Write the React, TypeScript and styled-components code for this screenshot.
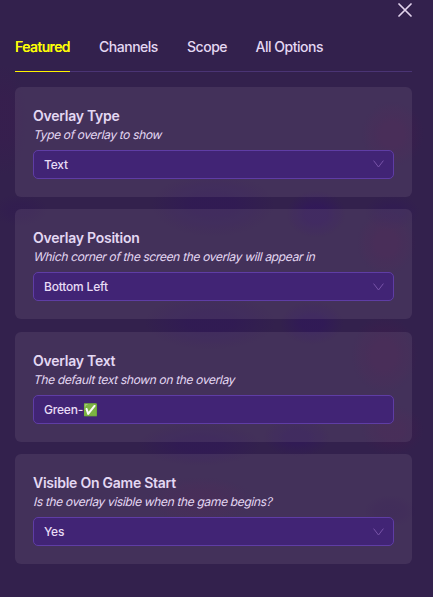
import React from 'react';
import styled, { createGlobalStyle } from 'styled-components';

const GlobalStyle = createGlobalStyle`
  *, *::before, *::after { box-sizing: border-box; }
  body { margin: 0; background: #33214d; }
`;

const glow = (x: number, y: number, w: number, h: number, color: string) =>
  `radial-gradient(ellipse ${w}px ${h}px at ${x}px ${y}px, ${color} 0%, ${color} 35%, transparent 100%)`;

const backdrop = [
  glow(213, 205, 62, 32, 'rgba(46,20,90,.45)'),
  glow(316, 214, 30, 24, 'rgba(48,18,98,.5)'),
  glow(392, 212, 28, 18, 'rgba(46,20,90,.3)'),
  glow(210, 322, 66, 28, 'rgba(46,20,90,.45)'),
  glow(312, 323, 32, 22, 'rgba(46,18,96,.45)'),
  glow(200, 444, 62, 22, 'rgba(46,20,90,.45)'),
  glow(297, 437, 34, 20, 'rgba(46,18,96,.4)'),
  glow(392, 134, 32, 34, 'rgba(74,24,74,.35)'),
  glow(386, 243, 30, 34, 'rgba(74,24,74,.35)'),
  glow(384, 355, 34, 40, 'rgba(74,24,74,.35)'),
  glow(392, 430, 32, 26, 'rgba(74,24,74,.3)'),
  glow(200, 500, 56, 24, 'rgba(74,24,74,.3)'),
  glow(390, 511, 26, 16, 'rgba(46,20,80,.35)'),
  glow(4, 120, 24, 56, 'rgba(64,24,80,.25)'),
  glow(20, 210, 28, 16, 'rgba(46,20,84,.25)'),
].join(',');

const Panel = styled.main`
  width: 433px;
  height: 597px;
  overflow: hidden;
  display: flex;
  flex-direction: column;
  padding: 0 21px 0 15px;
  background: ${backdrop}, #33214d;
  color: #e4d8f3;
  font-family: Inter, 'Noto Color Emoji', sans-serif;
`;

const Header = styled.header`
  display: flex;
  justify-content: flex-end;
  height: 22px;
  padding-top: 3px;
`;

const CloseButton = styled.button`
  width: 14px;
  height: 14px;
  padding: 0;
  border: 0;
  background: none;
  color: #e2d3ed;
  svg { display: block; }
`;

const TabBar = styled.nav`
  display: flex;
  gap: 29px;
  height: 50px;
  flex: none;
  background: linear-gradient(#4a3474, #4a3474) bottom / 100% 1px no-repeat;
`;

const Tab = styled.button<{ $active?: boolean; $width: number }>`
  width: ${p => p.$width}px;
  height: 50px;
  padding: 0 0 1px;
  border: 0;
  background: ${p => p.$active ? 'linear-gradient(#fff200, #fff200) bottom / 100% 1px no-repeat' : 'none'};
  color: ${p => p.$active ? '#fcfb08' : 'inherit'};
  font: ${p => p.$active ? 500 : 450} 14px/22px Inter, sans-serif;
  letter-spacing: ${p => p.$active ? '-0.54px' : '-0.48px'};
  text-shadow: ${p => p.$active ? '0 0 0.25px currentColor' : 'none'};
  text-align: left;
  white-space: nowrap;
`;

const Options = styled.section`
  display: flex;
  flex-direction: column;
  gap: 12.4px;
  padding-top: 15px;
`;

const Card = styled.div`
  height: 110px;
  padding: 18px;
  border-radius: 6px;
  background: rgba(110, 92, 125, 0.27);
`;

const Title = styled.h2`
  margin: 0;
  font-size: 14px;
  line-height: 22px;
  font-weight: 620;
  letter-spacing: -0.25px;
`;

const Description = styled.p`
  width: max-content;
  margin: 0 0 6.4px 0.7px;
  font-size: 12px;
  line-height: 16.6px;
  font-weight: 420;
  letter-spacing: -0.34px;
  transform: skewX(-14deg);
`;

const Field = styled.div`
  display: flex;
  align-items: center;
  justify-content: space-between;
  height: 29px;
  padding: 0 9px 0 10px;
  border: 1px solid #5f3da5;
  border-radius: 5px;
  background: #412475;
  font-size: 12px;
  font-weight: 450;
  letter-spacing: -0.2px;
  color: #e8dcf6;
`;

const Chevron = styled.svg`
  display: block;
  width: 11px;
  height: 8px;
  color: #7854a8;
`;

const tabs = [
  { label: 'Featured', width: 55 },
  { label: 'Channels', width: 59 },
  { label: 'Scope', width: 39.5 },
  { label: 'All Options', width: 70 },
];

const options = [
  { title: 'Overlay Type', description: 'Type of overlay to show', value: 'Text', select: true },
  { title: 'Overlay Position', description: 'Which corner of the screen the overlay will appear in', value: 'Bottom Left', select: true },
  { title: 'Overlay Text', description: 'The default text shown on the overlay', value: 'Green-✅', select: false },
  { title: 'Visible On Game Start', description: 'Is the overlay visible when the game begins?', value: 'Yes', select: true },
];

export default function App() {
  return (
    <>
      <GlobalStyle />
      <Panel>
        <Header>
          <CloseButton aria-label="Close">
            <svg width="14" height="14" viewBox="0 0 14 14" fill="none" stroke="currentColor" strokeWidth="1.7" strokeLinecap="round">
              <path d="M1 1l12 12M13 1L1 13" />
            </svg>
          </CloseButton>
        </Header>
        <TabBar>
          {tabs.map((t, i) => (
            <Tab key={t.label} $active={i === 0} $width={t.width}>{t.label}</Tab>
          ))}
        </TabBar>
        <Options>
          {options.map(o => (
            <Card key={o.title}>
              <Title>{o.title}</Title>
              <Description>{o.description}</Description>
              <Field>
                <span>{o.value}</span>
                {o.select && (
                  <Chevron viewBox="0 0 11 8" fill="none" stroke="currentColor" strokeWidth="1">
                    <path d="M0.6 0.6L5.5 7L10.4 0.6" />
                  </Chevron>
                )}
              </Field>
            </Card>
          ))}
        </Options>
      </Panel>
    </>
  );
}
